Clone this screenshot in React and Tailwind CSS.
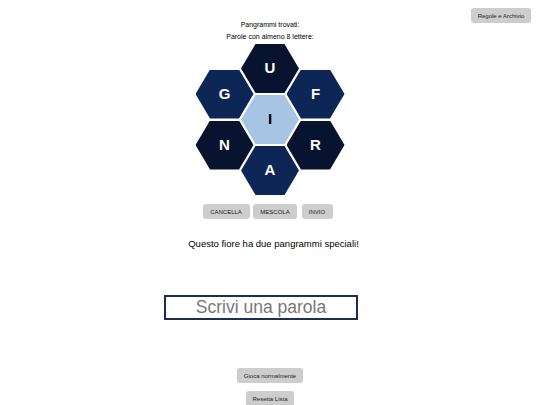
const hexes = [
  { letter: 'U', left: 45.5, top: 0, color: 'bg-[#08142f]' },
  { letter: 'G', left: 0, top: 25.5, color: 'bg-[#0e2656]' },
  { letter: 'F', left: 91, top: 25.5, color: 'bg-[#0e2656]' },
  { letter: 'I', left: 45.5, top: 51, color: 'bg-[#a6c4e4]', center: true },
  { letter: 'N', left: 0, top: 76.5, color: 'bg-[#08142f]' },
  { letter: 'R', left: 91, top: 76.5, color: 'bg-[#08142f]' },
  { letter: 'A', left: 45.5, top: 102, color: 'bg-[#0e2656]' },
]

const smallButton =
  'rounded-[3px] bg-[#cdcdcd] text-[6px] leading-none text-[#222] flex items-center justify-center'

function Hex({ letter, left, top, color, center }) {
  return (
    <div
      className={`absolute flex h-[49px] w-[58px] items-center justify-center ${color} [clip-path:polygon(25%_0,75%_0,100%_50%,75%_100%,25%_100%,0_50%)]`}
      style={{ left, top }}
    >
      <span className={`text-[15px] font-bold ${center ? 'text-black' : 'text-white'}`}>{letter}</span>
    </div>
  )
}

export default function App() {
  return (
    <div className="relative min-h-[405px] w-[540px] overflow-hidden bg-white font-['Liberation_Sans',Arial,sans-serif] text-black">
      <button className={`absolute right-[9px] top-[8px] h-[15px] w-[60px] ${smallButton}`} type="button">
        Regole e Archivio
      </button>

      <main className="flex flex-col items-center pt-[19px]">
        <p className="text-[7px] leading-[11.5px]">Pangrammi trovati:</p>
        <p className="text-[7px] leading-[11.5px]">Parole con almeno 8 lettere:</p>

        <div className="relative mt-[2px] h-[151px] w-[149px]">
          {hexes.map((hex) => (
            <Hex key={hex.letter} {...hex} />
          ))}
        </div>

        <div className="mr-[5px] mt-[9px] flex gap-[3.5px]">
          <button className={`h-[15px] w-[47px] ${smallButton}`} type="button">CANCELLA</button>
          <button className={`h-[15px] w-[44px] ${smallButton}`} type="button">MESCOLA</button>
          <button className={`ml-[1px] h-[15px] w-[31px] ${smallButton}`} type="button">INVIO</button>
        </div>

        <p className="ml-[7px] mt-[19px] text-[9.5px] leading-[12px]">Questo fiore ha due pangrammi speciali!</p>

        <input
          className="mr-[18px] mt-[45px] h-[25px] w-[194px] border-2 border-[#1b2f55] bg-white text-center text-[17.5px] text-[#333] outline-none placeholder:text-[#777]"
          placeholder="Scrivi una parola"
          type="text"
        />

        <button className={`mt-[48px] h-[15px] w-[66px] ${smallButton}`} type="button">
          Gioca normalmente
        </button>
        <button className={`mt-[8px] h-[15px] w-[48px] ${smallButton}`} type="button">
          Resetta Lista
        </button>
      </main>
    </div>
  )
}
